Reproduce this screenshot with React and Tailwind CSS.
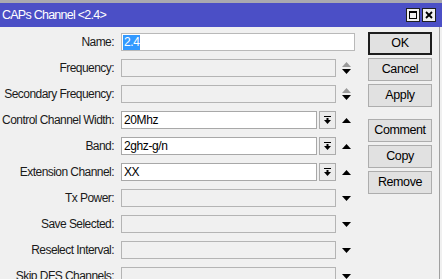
import React from "react";

const font = { fontFamily: '"Liberation Sans", Arial, sans-serif' };

function UpTri({ color = "#000" }) {
  return (
    <svg width="9" height="5" viewBox="0 0 9 5">
      <polygon points="0,5 9,5 4.5,0" fill={color} />
    </svg>
  );
}
function DownTri({ color = "#000" }) {
  return (
    <svg width="9" height="5" viewBox="0 0 9 5">
      <polygon points="0,0 9,0 4.5,5" fill={color} />
    </svg>
  );
}

function Spin() {
  return (
    <div className="flex flex-col items-center gap-[2px]">
      <UpTri color="#9a9a9a" />
      <DownTri />
    </div>
  );
}

function DropBtn() {
  return (
    <div className="w-[17px] h-[18px] border border-[#acacac] bg-[#ececec] flex items-center justify-center">
      <svg width="7" height="8" viewBox="0 0 7 8">
        <rect x="0" y="0" width="7" height="1" fill="#000" />
        <rect x="2.5" y="2" width="2" height="2" fill="#000" />
        <polygon points="0,4 7,4 3.5,8" fill="#000" />
      </svg>
    </div>
  );
}

function Row({ label, children }) {
  return (
    <div className="h-[26px] shrink-0 flex items-center">
      <div className="w-[115px] text-right pr-[1px] text-[12px] tracking-[-0.55px] text-[#1a1a1a] whitespace-nowrap">
        {label}
      </div>
      <div className="ml-[6px] flex items-center">{children}</div>
    </div>
  );
}

function DisabledInput({ w = "w-[215px]" }) {
  return <div className={`${w} h-[18px] border border-[#b4b4b4] bg-[#f0f0f0]`} />;
}

function TextInput({ value }) {
  return (
    <div className="w-[196px] h-[18px] border border-[#a8a8a8] bg-white flex items-center pl-[2px] text-[12px] tracking-[-0.4px] text-black">
      {value}
    </div>
  );
}

function Btn({ children, def }) {
  return (
    <div
      className={`w-[64px] h-[23px] shrink-0 flex items-center justify-center text-[12.5px] tracking-[-0.4px] text-black bg-[#e1e1e1] ${
        def ? "border-2 border-[#1e1e1e]" : "border border-[#adadad]"
      }`}
    >
      {children}
    </div>
  );
}

export default function App() {
  return (
    <div style={font} className="w-[442px] h-[279px] overflow-hidden bg-[#f0f0f0] flex flex-col">
      <div className="h-[3px] shrink-0 bg-[#a9a9b0]" />
      <div className="h-[24px] shrink-0 bg-[#4b4fc6] flex items-center justify-between pl-[2px] pr-[6px]">
        <span className="text-white text-[12.5px] tracking-[-0.75px]">CAPs Channel &lt;2.4&gt;</span>
        <div className="flex gap-[2px]">
          <div className="w-[14px] h-[14px] bg-[#f0f0f0] border border-[#202020] flex items-center justify-center">
            <div className="w-[8px] h-[8px] border border-black border-t-2" />
          </div>
          <div className="w-[14px] h-[14px] bg-[#f0f0f0] border border-[#202020] flex items-center justify-center">
            <svg width="8" height="8" viewBox="0 0 8 8">
              <path d="M1 1 L7 7 M7 1 L1 7" stroke="#000" strokeWidth="1.8" />
            </svg>
          </div>
        </div>
      </div>
      <div className="flex-1 min-h-0 flex border-r border-[#a0a0a0] mr-[2px]">
        <div className="pt-[2px] flex flex-col">
          <Row label="Name:">
            <div className="w-[234px] h-[18px] border border-[#b9b9b9] bg-white flex items-center pl-[1px] text-[12px] tracking-[-0.4px]">
              <span className="bg-[#3399ff] text-white px-[1px] leading-[15px]">2.4</span>
            </div>
          </Row>
          <Row label="Frequency:">
            <DisabledInput />
            <div className="ml-[6px]"><Spin /></div>
          </Row>
          <Row label="Secondary Frequency:">
            <DisabledInput />
            <div className="ml-[6px]"><Spin /></div>
          </Row>
          <Row label="Control Channel Width:">
            <TextInput value="20Mhz" />
            <div className="ml-[2px]"><DropBtn /></div>
            <div className="ml-[6px]"><UpTri /></div>
          </Row>
          <Row label="Band:">
            <TextInput value="2ghz-g/n" />
            <div className="ml-[2px]"><DropBtn /></div>
            <div className="ml-[6px]"><UpTri /></div>
          </Row>
          <Row label="Extension Channel:">
            <TextInput value="XX" />
            <div className="ml-[2px]"><DropBtn /></div>
            <div className="ml-[6px]"><UpTri /></div>
          </Row>
          <Row label="Tx Power:">
            <DisabledInput />
            <div className="ml-[6px]"><DownTri /></div>
          </Row>
          <Row label="Save Selected:">
            <DisabledInput />
            <div className="ml-[6px]"><DownTri /></div>
          </Row>
          <Row label="Reselect Interval:">
            <DisabledInput />
            <div className="ml-[6px]"><DownTri /></div>
          </Row>
          <Row label="Skip DFS Channels:">
            <DisabledInput />
            <div className="ml-[6px]"><DownTri /></div>
          </Row>
        </div>
        <div className="ml-[13px] pt-[5px] flex flex-col gap-[3px]">
          <Btn def>OK</Btn>
          <Btn>Cancel</Btn>
          <Btn>Apply</Btn>
          <div className="h-[6px] shrink-0" />
          <Btn>Comment</Btn>
          <Btn>Copy</Btn>
          <Btn>Remove</Btn>
        </div>
      </div>
    </div>
  );
}
